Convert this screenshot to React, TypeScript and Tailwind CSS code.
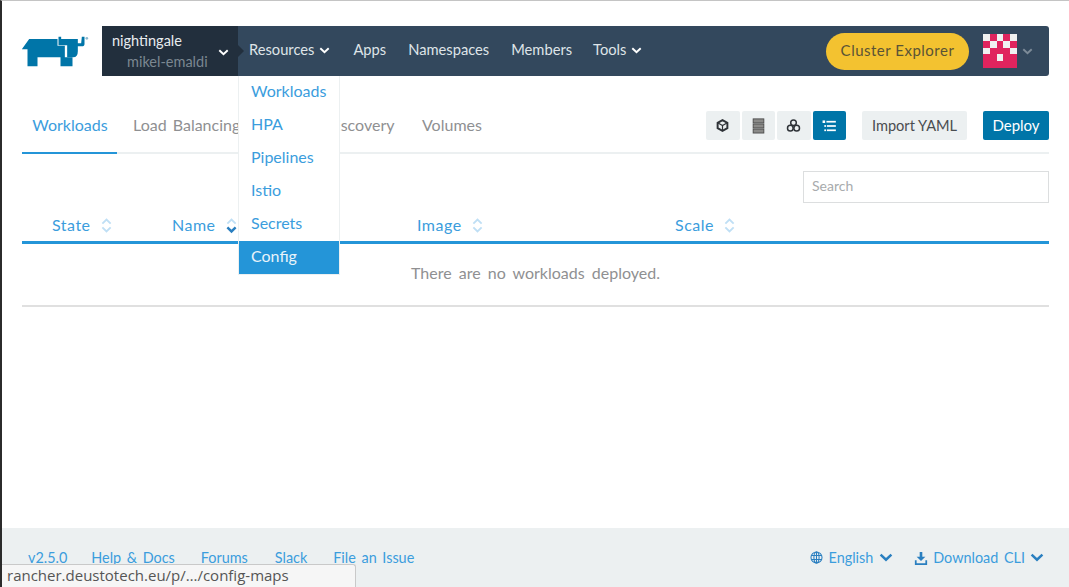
import { ReactNode } from "react"

function Chevron({ className = "h-[7px] w-[11px]" }: { className?: string }) {
  return (
    <svg viewBox="0 0 12 8" className={className} fill="none" stroke="currentColor" strokeWidth="2.2">
      <path d="M1.2 1.4 6 6l4.8-4.6" />
    </svg>
  )
}

function RancherLogo() {
  return (
    <svg viewBox="60 100 215 105" className="-ml-[3px] h-[35px] w-[72px] shrink-0" fill="#0075a8">
      <path d="M68 146 90 115H175V135H197V170H220V197H184V170H115V197H85V146Z" />
      <path d="M178 108H186V115H236V128H246L248 108H256V130Q256 137 248 137H236V152Q236 170 222 170H204V134H178Z" />
      <circle cx="263" cy="113" r="4" fill="#8db9cf" />
    </svg>
  )
}

function Avatar() {
  const cells = [1, 0, 1, 0, 1, 0, 1, 0, 1, 0, 1, 0, 0, 0, 1, 0, 0, 1, 0, 0, 0, 0, 0, 0, 0]
  return (
    <div className="grid h-[34px] w-[34px] grid-cols-5 grid-rows-5 bg-[#e0245e]">
      {cells.map((c, i) => (
        <div key={i} className={c ? "bg-[#f0f0f0]" : ""} />
      ))}
    </div>
  )
}

function SortCaret({ active }: { active?: boolean }) {
  return (
    <svg viewBox="0 0 12 18" className="ml-[10px] h-[17px] w-[11px]" fill="none" strokeWidth="2">
      <path d="M1.5 7 6 2.5 10.5 7" stroke="#bfdff5" />
      <path d="M1.5 11 6 15.5 10.5 11" stroke={active ? "#2a7fc0" : "#bfdff5"} strokeWidth={active ? 2.6 : 2} />
    </svg>
  )
}

function IconButton({ children, active }: { children: ReactNode; active?: boolean }) {
  return (
    <div
      className={`flex h-[29px] w-[33.5px] items-center justify-center rounded-[2px] ${
        active ? "bg-[#0075a8] text-white" : "bg-[#ecf0f1] text-[#3b3f44]"
      }`}
    >
      {children}
    </div>
  )
}

function Header() {
  return (
    <div className="ml-[22px] mr-[20px] flex h-[50px] items-stretch">
      <div className="flex w-[80px] shrink-0 items-center">
        <RancherLogo />
      </div>
      <div className="relative flex w-[136px] shrink-0 items-center bg-[#222f3d] pl-[10px] text-[14.5px] leading-[21px]">
        <div className="flex flex-col">
          <span className="text-[#e8ecef]">nightingale</span>
          <span className="ml-[15px] text-[#7b8791]">mikel-emaldi</span>
        </div>
        <Chevron className="absolute right-[9px] top-[23px] h-[7px] w-[11px] text-white" />
        <div className="absolute left-full top-[19px] h-0 w-0 border-y-[6px] border-l-[6px] border-y-transparent border-l-[#222f3d]" />
      </div>
      <div className="flex flex-1 items-center rounded-r-[3px] bg-[#33485d] pl-[11px] pr-[16px] text-[14.7px] text-[#dfe4e8]">
        <div className="flex items-center gap-[5px] pb-[3px]">
          Resources <Chevron className="mt-[3px] h-[7px] w-[11px] text-white" />
        </div>
        <span className="ml-[23px] pb-[3px]">Apps</span>
        <span className="ml-[22px] pb-[3px]">Namespaces</span>
        <span className="ml-[22px] pb-[3px]">Members</span>
        <div className="ml-[21px] flex items-center gap-[5px] pb-[3px]">
          Tools <Chevron className="mt-[3px] h-[7px] w-[11px] text-white" />
        </div>
        <div className="ml-auto flex h-[37px] w-[143px] items-center justify-center rounded-full bg-[#f3c230] pb-[1px] text-[15px] tracking-[0.5px] text-[#5a5336]">
          Cluster Explorer
        </div>
        <div className="ml-[14px]">
          <Avatar />
        </div>
        <Chevron className="ml-[5px] h-[7px] w-[11px] text-[#7d8b98]" />
      </div>
    </div>
  )
}

function Tabs() {
  return (
    <div className="ml-[22px] mr-[20px] mt-[35px] flex h-[43px] items-start whitespace-nowrap border-b-2 border-[#ecf0f1] text-[16px] [word-spacing:2px]">
      <div className="-mb-[2px] flex h-[43px] w-[95px] items-start justify-center border-b-2 border-[#2495d8] pt-[2px] pl-[1px] text-[#3b9ddd]">
        Workloads
      </div>
      <div className="ml-[16px] flex gap-[27.5px] pt-[2px] text-[#8f9092]">
        <span>Load Balancing</span>
        <span>Service Discovery</span>
        <span>Volumes</span>
      </div>
      <div className="ml-auto flex h-[29px] items-center text-[15px] [word-spacing:0]">
        <div className="flex gap-[2px]">
          <IconButton>
            <svg viewBox="0 0 16 16" className="h-[13px] w-[13px]" fill="none" stroke="#2f3338" strokeWidth="2.4">
              <path d="M8 1.5 14 4.7v6.6L8 14.5 2 11.3V4.7Z" />
              <path d="M2.5 5 8 8l5.5-3M8 8v6" strokeWidth="1.5" />
            </svg>
          </IconButton>
          <IconButton>
            <svg viewBox="0 0 14 18" className="h-[16px] w-[13px]" fill="#8a8a88" stroke="#4a4a4a" strokeWidth="1">
              <rect x="1" y="1" width="12" height="4.5" />
              <rect x="1" y="6.7" width="12" height="4.5" />
              <rect x="1" y="12.4" width="12" height="4.5" />
            </svg>
          </IconButton>
          <IconButton>
            <svg viewBox="0 0 16 16" className="h-[15px] w-[15px]" fill="none" stroke="#2f3338" strokeWidth="1.6">
              <circle cx="8" cy="5" r="3" />
              <circle cx="4.6" cy="10.8" r="3" />
              <circle cx="11.4" cy="10.8" r="3" />
            </svg>
          </IconButton>
          <IconButton active>
            <svg viewBox="0 0 16 14" className="h-[12px] w-[14px]" fill="white">
              <rect x="0.5" y="0.5" width="3" height="3" />
              <rect x="5" y="1" width="11" height="2" />
              <rect x="2.5" y="6" width="2" height="2" />
              <rect x="5.5" y="6" width="10.5" height="2" />
              <rect x="2.5" y="11" width="2" height="2" />
              <rect x="5.5" y="11" width="10.5" height="2" />
            </svg>
          </IconButton>
        </div>
        <div className="ml-[16px] flex h-[29px] w-[105px] items-center justify-center rounded-[2px] bg-[#ecf0f1] text-[14.6px] text-[#4a4d50]">
          Import YAML
        </div>
        <div className="ml-[16px] flex h-[29px] w-[66px] items-center justify-center rounded-[2px] bg-[#0075a8] text-white">
          Deploy
        </div>
      </div>
    </div>
  )
}

function WorkloadsTable() {
  return (
    <div className="ml-[22px] mr-[20px]">
      <div className="mt-[17px] flex justify-end">
        <div className="flex h-[32px] w-[246px] items-center border border-[#dcdedf] px-[8px] pb-[3px] text-[14px] text-[#a8abad]">
          Search
        </div>
      </div>
      <div className="mt-[9px] flex h-[32px] items-center border-b-[3px] border-[#2495d8] pb-[3px] text-[16px] tracking-[0.5px] text-[#3b9ddd]">
        <div className="flex w-[150px] items-center pl-[30px]">
          State
          <SortCaret />
        </div>
        <div className="flex w-[245px] items-center">
          Name
          <SortCaret active />
        </div>
        <div className="flex w-[258px] items-center">
          Image
          <SortCaret />
        </div>
        <div className="flex items-center">
          Scale
          <SortCaret />
        </div>
      </div>
      <div className="flex h-[63px] items-center justify-center border-b-2 border-[#e0e0e0] pb-[3px] text-[16px] text-[#8f9092] [word-spacing:3px]">
        There are no workloads deployed.
      </div>
    </div>
  )
}

function ResourcesMenu() {
  const items = ["Workloads", "HPA", "Pipelines", "Istio", "Secrets", "Config"]
  return (
    <div className="absolute left-[238px] top-[76px] w-[102px] border-x border-b border-[#ecf0f1] bg-white text-[16px]">
      {items.map(item => (
        <div
          key={item}
          className={`flex h-[33px] items-center pb-[3px] pl-[12px] ${
            item === "Config" ? "bg-[#2495d8] text-[#e8f3fa]" : "text-[#3b9ddd]"
          }`}
        >
          {item}
        </div>
      ))}
    </div>
  )
}

function Footer() {
  return (
    <div className="mt-auto flex h-[59px] items-start bg-[#ecf0f1] pl-[26px] pr-[25px] pt-[19px] text-[14.4px] text-[#3b9ddd] [word-spacing:2px]">
      <span>v2.5.0</span>
      <span className="ml-[24px]">Help &amp; Docs</span>
      <span className="ml-[26px]">Forums</span>
      <span className="ml-[27px]">Slack</span>
      <span className="ml-[26px]">File an Issue</span>
      <div className="ml-auto flex items-center gap-[6px]">
        <svg viewBox="0 0 16 16" className="h-[13px] w-[13px]" fill="none" stroke="#2a7fc0" strokeWidth="1.3">
          <circle cx="8" cy="8" r="6.8" />
          <ellipse cx="8" cy="8" rx="3.2" ry="6.8" />
          <path d="M1.5 5.5h13M1.5 10.5h13M8 1v14" />
        </svg>
        English
        <Chevron className="h-[9px] w-[14px] text-[#2a7fc0]" />
      </div>
      <div className="ml-[21px] flex items-center gap-[5px]">
        <svg viewBox="0 0 16 16" className="h-[14px] w-[14px]" fill="#2a7fc0">
          <path d="M6.5 1h3v5.5H13L8 11.5 3 6.5h3.5Z" />
          <path d="M1 10.5h2V14h10v-3.5h2V16H1Z" />
        </svg>
        Download CLI
        <Chevron className="h-[9px] w-[14px] text-[#2a7fc0]" />
      </div>
    </div>
  )
}

export default function App() {
  return (
    <div className="relative flex h-[587px] w-[1069px] flex-col overflow-hidden border-l-2 border-t border-l-[#2b2b2b] border-t-[#c4c4c4] bg-white pt-[25px] font-['Lato',sans-serif]">
      <div className="-ml-[2px] flex w-[1069px] flex-col">
        <Header />
        <Tabs />
        <WorkloadsTable />
      </div>
      <Footer />
      <div className="absolute -left-[2px] -top-[1px]">
        <ResourcesMenu />
      </div>
      <div className="absolute bottom-0 left-0 flex h-[23px] w-[354px] items-center rounded-tr-[3px] border-r border-t border-[#c9c9c9] bg-[#f6f6f6] pb-[1px] pl-[5px] font-['Open_Sans',sans-serif] text-[15px] text-[#555]">
        rancher.deustotech.eu/p/…/config-maps
      </div>
    </div>
  )
}
